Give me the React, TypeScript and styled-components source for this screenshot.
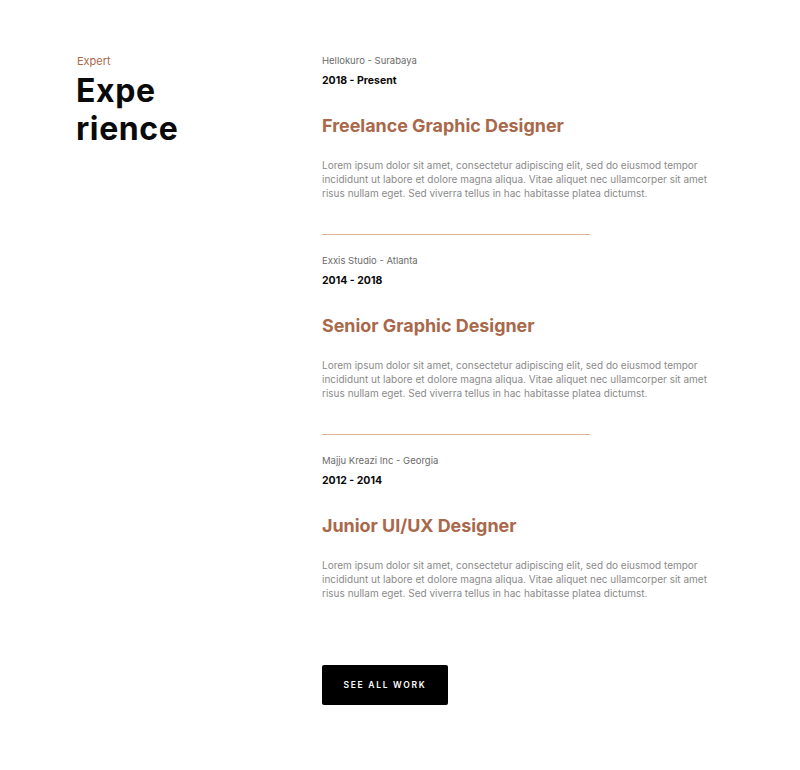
import React from "react";
import styled, { createGlobalStyle } from "styled-components";

const Global = createGlobalStyle`
  html, body { margin: 0; padding: 0; background: #ffffff; }
  body { font-family: "Inter", "Open Sans", sans-serif; -webkit-font-smoothing: antialiased; }
`;

const Page = styled.div`
  display: grid;
  grid-template-columns: 246px 1fr;
  padding: 54px 0 60px 76px;
  width: 800px;
  box-sizing: border-box;
`;

const Side = styled.div`
  display: flex;
  flex-direction: column;
`;

const Eyebrow = styled.div`
  font-size: 11px;
  line-height: 14px;
  color: #a9684a;
  padding-left: 1px;
`;

const Heading = styled.h2`
  margin: 4px 0 0;
  font-size: 32px;
  line-height: 38px;
  font-weight: 700;
  color: #0a0a0a;
  letter-spacing: 0.6px;
`;

const Main = styled.div`
  display: flex;
  flex-direction: column;
`;

const Item = styled.div`
  display: flex;
  flex-direction: column;
`;

const Company = styled.div`
  font-size: 9.5px;
  line-height: 14px;
  color: #6b6b6b;
`;

const Period = styled.div`
  margin-top: 5px;
  font-size: 10.5px;
  line-height: 16px;
  font-weight: 700;
  color: #0a0a0a;
`;

const Title = styled.h3`
  margin: 24px 0 0;
  font-size: 17.9px;
  line-height: 26px;
  font-weight: 700;
  color: #a9684a;
`;

const Text = styled.p`
  margin: 19px 0 0;
  width: 400px;
  font-size: 10px;
  line-height: 14px;
  color: #8a8a8a;
`;

const Divider = styled.hr`
  margin: 34px 0 19px;
  width: 268px;
  border: none;
  border-top: 1px solid #dbb59c;
  height: 0;
`;

const Button = styled.button`
  margin-top: 65px;
  width: 126px;
  height: 40px;
  background: #000;
  color: #fff;
  border: none;
  border-radius: 2px;
  font-family: inherit;
  font-size: 8.5px;
  font-weight: 600;
  letter-spacing: 1.7px;
  text-transform: uppercase;
  cursor: pointer;
  align-self: flex-start;
`;

const lorem =
  "Lorem ipsum dolor sit amet, consectetur adipiscing elit, sed do eiusmod tempor incididunt ut labore et dolore magna aliqua. Vitae aliquet nec ullamcorper sit amet risus nullam eget. Sed viverra tellus in hac habitasse platea dictumst.";

const items = [
  { company: "Hellokuro - Surabaya", period: "2018 - Present", title: "Freelance Graphic Designer" },
  { company: "Exxis Studio - Atlanta", period: "2014 - 2018", title: "Senior Graphic Designer" },
  { company: "Majju Kreazi Inc - Georgia", period: "2012 - 2014", title: "Junior UI/UX Designer" },
];

export default function App() {
  return (
    <>
      <Global />
      <Page>
        <Side>
          <Eyebrow>Expert</Eyebrow>
          <Heading>
            Expe
            <br />
            rience
          </Heading>
        </Side>
        <Main>
          {items.map((it, i) => (
            <React.Fragment key={it.company}>
              <Item>
                <Company>{it.company}</Company>
                <Period>{it.period}</Period>
                <Title>{it.title}</Title>
                <Text>{lorem}</Text>
              </Item>
              {i < items.length - 1 && <Divider />}
            </React.Fragment>
          ))}
          <Button>See All Work</Button>
        </Main>
      </Page>
    </>
  );
}
